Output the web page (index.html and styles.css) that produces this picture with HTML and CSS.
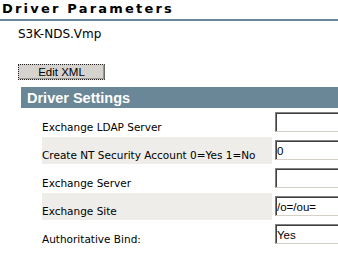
FILE: index.html
```html
<!DOCTYPE html>
<html>
<head>
<meta charset="utf-8">
<link rel="stylesheet" href="styles.css">
</head>
<body>
<h1 class="title">Driver Parameters</h1>
<div class="file">S3K-NDS.Vmp</div>
<button class="edit" type="button">Edit XML</button>
<section class="settings">
  <h2 class="settings-head">Driver Settings</h2>
  <div class="grid">
    <div class="label">Exchange LDAP Server</div>
    <div class="field"><input class="box" type="text" value=""></div>
    <div class="label alt">Create NT Security Account 0=Yes 1=No</div>
    <div class="field"><input class="box" type="text" value="0"></div>
    <div class="label">Exchange Server</div>
    <div class="field"><input class="box" type="text" value=""></div>
    <div class="label alt">Exchange Site</div>
    <div class="field"><input class="box" type="text" value="/o=/ou="></div>
    <div class="label">Authoritative Bind:</div>
    <div class="field"><input class="box" type="text" value="Yes"></div>
  </div>
</section>
</body>
</html>
```

FILE: styles.css
```css
html, body {
  margin: 0;
  padding: 0;
  background: #ffffff;
  overflow: hidden;
}

.title {
  margin: 0;
  padding: 1px 0 2px 2px;
  height: 16px;
  line-height: 16px;
  font-family: "DejaVu Sans", sans-serif;
  font-weight: bold;
  font-size: 13px;
  letter-spacing: 2.2px;
  color: #000;
  border-bottom: 2px solid #6a8797;
}

.file {
  margin: 6px 0 0 18px;
  font-family: "DejaVu Sans", sans-serif;
  font-size: 12px;
  line-height: 14px;
  color: #000;
}

.edit {
  display: block;
  margin: 23px 0 0 18px;
  width: 87px;
  height: 16px;
  padding: 0;
  box-sizing: border-box;
  background: #d6d3ce;
  border: 1px dotted #222;
  border-right: 1px solid #6b6b6b;
  box-shadow: inset -1px -1px 0 #9a9791;
  font-family: "Liberation Sans", sans-serif;
  font-size: 11.5px;
  line-height: 13px;
  color: #000;
}

.settings {
  margin: 7px 0 0 21px;
  overflow: hidden;
}

.settings-head {
  margin: 0;
  height: 19px;
  padding: 2px 0 0 6px;
  line-height: 19px;
  background: #6a8797;
  color: #ffffff;
  font-family: "Liberation Sans", sans-serif;
  font-weight: bold;
  font-size: 14.5px;
}

.grid {
  margin: 1px 0 0 21px;
  display: grid;
  grid-template-columns: 230px 1fr;
  grid-auto-rows: 27px;
  row-gap: 1px;
  column-gap: 3px;
}

.label {
  padding-top: 12px;
  line-height: 13px;
  font-family: "DejaVu Sans", sans-serif;
  font-size: 10.5px;
  color: #000;
  white-space: nowrap;
}

.label.alt {
  background: #eeede9;
}

.field {
  padding-top: 3px;
}

.box {
  display: block;
  width: 150px;
  height: 20px;
  box-sizing: border-box;
  margin: 0;
  padding: 2px 0 0 1px;
  border: 1px solid;
  border-color: #808080 #d4d0c8 #d4d0c8 #808080;
  box-shadow: inset 1px 1px 0 #404040;
  background: #fff;
  font-family: "Liberation Sans", sans-serif;
  font-size: 11.5px;
  color: #000;
  outline: none;
}
```
